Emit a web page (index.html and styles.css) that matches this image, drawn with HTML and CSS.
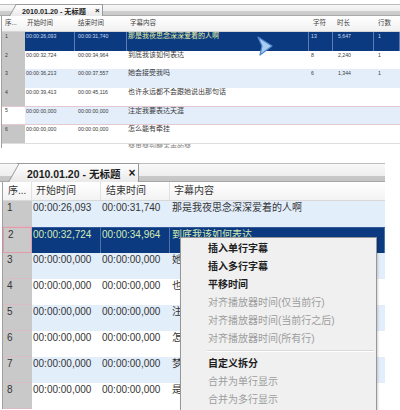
FILE: index.html
```html
<!DOCTYPE html>
<html lang="zh-CN">
<head>
<meta charset="utf-8">
<title>字幕编辑</title>
<link rel="stylesheet" href="styles.css">
</head>
<body>
<section class="shot shot-top">
  <div class="tabstrip tabstrip-top">
    <div class="strip-fill strip-left"></div>
    <div class="tab"><span class="tab-title">2010.01.20 - 无标题</span><span class="tab-close">×</span></div>
    <div class="strip-fill strip-rest"></div>
  </div>
  <div class="t-table">
    <div class="t-row t-head">
      <div class="c g">序...</div><div class="c p2">开始时间</div><div class="c p3">结束时间</div><div class="c p3">字幕内容</div><div class="c p4">字符</div><div class="c p4">时长</div><div class="c p4">行数</div>
    </div>
    <div class="t-row sel">
      <div class="c g">1</div><div class="c">00:00:26,093</div><div class="c p3">00:00:31,740</div><div class="c cjk">那是我夜思念深深爱着的人啊</div><div class="c p2">13</div><div class="c p5">5,647</div><div class="c p4">1</div>
    </div>
    <div class="t-row">
      <div class="c g">2</div><div class="c">00:00:32,724</div><div class="c p3">00:00:34,964</div><div class="c cjk">到底我该如何表达</div><div class="c p2">8</div><div class="c p5">2,240</div><div class="c p4">1</div>
    </div>
    <div class="t-row alt">
      <div class="c g">3</div><div class="c">00:00:36,213</div><div class="c p3">00:00:37,557</div><div class="c cjk">她会接受我吗</div><div class="c p2">6</div><div class="c p5">1,344</div><div class="c p4">1</div>
    </div>
    <div class="t-row">
      <div class="c g">4</div><div class="c">00:00:39,413</div><div class="c p3">00:00:45,116</div><div class="c cjk">也许永远都不会跟她说出那句话</div><div class="c"></div><div class="c"></div><div class="c"></div>
    </div>
    <div class="t-row alt pink">
      <div class="c g">5</div><div class="c">00:00:00,000</div><div class="c p3">00:00:00,000</div><div class="c cjk">注定我要表达天涯</div><div class="c"></div><div class="c"></div><div class="c"></div>
    </div>
    <div class="t-row">
      <div class="c g">6</div><div class="c">00:00:00,000</div><div class="c p3">00:00:00,000</div><div class="c cjk">怎么能有牵挂</div><div class="c"></div><div class="c"></div><div class="c"></div>
    </div>
    <div class="t-row t-last">
      <div class="c"></div><div class="c"></div><div class="c"></div><div class="c cjk">梦里梦到醒不来的梦</div><div class="c"></div><div class="c"></div><div class="c"></div>
    </div>
  </div>
  <svg class="cursor" width="18" height="21" viewBox="0 0 18 21"><polygon points="2,1 16,10 4,19 6,10" fill="#a9cdf0" stroke="#4f86cc" stroke-width="1.2" stroke-linejoin="round"/></svg>
</section>

<section class="shot shot-bottom">
  <div class="tabstrip tabstrip-bottom">
    <div class="strip-fill strip-left"></div>
    <div class="tab"><span class="tab-title">2010.01.20 - 无标题</span><span class="tab-close">×</span></div>
    <div class="strip-fill strip-rest"></div>
  </div>
  <div class="b-table">
    <div class="b-row b-head">
      <div class="c g">序...</div><div class="c">开始时间</div><div class="c">结束时间</div><div class="c">字幕内容</div>
    </div>
    <div class="b-row alt"><div class="c g">1</div><div class="c">00:00:26,093</div><div class="c">00:00:31,740</div><div class="c">那是我夜思念深深爱着的人啊</div></div>
    <div class="b-row sel"><div class="c g">2</div><div class="c">00:00:32,724</div><div class="c">00:00:34,964</div><div class="c">到底我该如何表达</div></div>
    <div class="b-row alt"><div class="c g">3</div><div class="c">00:00:00,000</div><div class="c">00:00:00,000</div><div class="c">她会接受我吗</div></div>
    <div class="b-row"><div class="c g">4</div><div class="c">00:00:00,000</div><div class="c">00:00:00,000</div><div class="c">也许永远都不会跟她说出那句话</div></div>
    <div class="b-row alt"><div class="c g">5</div><div class="c">00:00:00,000</div><div class="c">00:00:00,000</div><div class="c">注定我要表达天涯</div></div>
    <div class="b-row"><div class="c g">6</div><div class="c">00:00:00,000</div><div class="c">00:00:00,000</div><div class="c">怎么能有牵挂</div></div>
    <div class="b-row alt"><div class="c g">7</div><div class="c">00:00:00,000</div><div class="c">00:00:00,000</div><div class="c">梦里梦到醒不来的梦</div></div>
    <div class="b-row"><div class="c g">8</div><div class="c">00:00:00,000</div><div class="c">00:00:00,000</div><div class="c">是否在你身边</div></div>
  </div>

  <ul class="menu">
    <li class="mi on">插入单行字幕</li>
    <li class="mi on">插入多行字幕</li>
    <li class="mi on">平移时间</li>
    <li class="mi off">对齐播放器时间(仅当前行)</li>
    <li class="mi off">对齐播放器时间(当前行之后)</li>
    <li class="mi off">对齐播放器时间(所有行)</li>
    <li class="sep"></li>
    <li class="mi on">自定义拆分</li>
    <li class="mi off">合并为单行显示</li>
    <li class="mi off">合并为多行显示</li>
  </ul>
</section>
</body>
</html>
```

FILE: styles.css
```css
html, body {
  margin: 0;
  padding: 0;
  background: #ffffff;
  overflow: hidden;
}
body {
  width: 400px;
  height: 410px;
  font-family: "Liberation Sans", "Noto Sans CJK SC", sans-serif;
  color: #333333;
}

.shot {
  position: relative;
  overflow: hidden;
}

/* ---------- tab strips ---------- */
.tabstrip {
  display: flex;
  align-items: flex-end;
}
.strip-fill {
  box-sizing: border-box;
  border-top: 1px solid #bdbdbd;
}
.strip-rest {
  flex: 1;
}
.tab {
  position: relative;
  z-index: 0;
  display: flex;
  align-items: center;
  box-sizing: border-box;
  background: linear-gradient(#ffffff, #e9e9e9);
  border-top: 1px solid #9a9a9a;
  border-right: 1px solid #9a9a9a;
  font-weight: bold;
  color: #1c1c1c;
  white-space: nowrap;
}
.tab::before {
  content: "";
  position: absolute;
  z-index: -1;
  top: -1px;
  bottom: 0;
  left: -9px;
  width: 18px;
  background: linear-gradient(#ffffff, #e9e9e9);
  border-left: 1px solid #9a9a9a;
  border-top: 1px solid #9a9a9a;
  transform: skewX(-30deg);
  transform-origin: bottom left;
}

/* top strip */
.tabstrip-top {
  height: 16px;
}
.tabstrip-top .strip-fill {
  height: 12px;
  background: linear-gradient(#f7f7f7 0, #ececec 62%, #cfcfcf 62%, #c9c9c9 100%);
  border-bottom: 1px solid #aaaaaa;
}
.tabstrip-top .strip-left {
  width: 18px;
}
.tabstrip-top .tab {
  height: 12px;
  width: 85px;
  padding-left: 4px;
  font-size: 7.2px;
}
.tabstrip-top .tab-close {
  margin-left: 9px;
  font-size: 8px;
}

/* bottom strip */
.tabstrip-bottom {
  height: 20px;
  width: 385px;
}
.tabstrip-bottom .strip-fill {
  height: 19px;
  background: linear-gradient(#f8f8f8 0, #eeeeee 70%, #c9c9c9 72%, #c4c4c4 100%);
  border-bottom: 1px solid #a8a8a8;
}
.tabstrip-bottom .strip-left {
  width: 17px;
}
.tabstrip-bottom .tab {
  height: 19px;
  width: 122px;
  padding-left: 10px;
  font-size: 10.5px;
}
.tabstrip-bottom .tab-close {
  margin-left: 8px;
  font-size: 12px;
}

/* ---------- top table ---------- */
.shot-top {
  height: 148px;
}
.t-table {
  margin-left: 1px;
  border-left: 1px solid #a2a2a2;
}
.t-row {
  display: grid;
  grid-template-columns: 23px 50px 52px 182px 24px 41px 1fr;
  height: 18.5px;
}
.t-row .c {
  font-size: 5.2px;
  line-height: 8px;
  padding-left: 1px;
  white-space: nowrap;
  overflow: hidden;
  color: #3a3a3a;
}
.t-row .cjk {
  font-size: 7px;
  line-height: 8px;
}
.t-row .g {
  background: #c6c6c6;
  padding-left: 3px;
}
.t-row .p2 { padding-left: 2px; }
.t-row .p3 { padding-left: 3px; }
.t-row .p4 { padding-left: 4px; }
.t-row .p5 { padding-left: 5px; }

.t-head {
  height: 16px;
  background: linear-gradient(#ffffff, #f1f1f1);
  box-sizing: border-box;
  border-bottom: 1px solid #d6d6d6;
}
.t-head .c {
  font-size: 6.5px;
  line-height: 14px;
  color: #444444;
}
.t-head .g {
  background: transparent;
}
.t-row.alt .c {
  background: #e3eefa;
}
.t-row.alt .g {
  background: #c6c6c6;
}
.t-row.pink {
  box-shadow: inset 0 1px #e4c9d2, inset 0 -1px #e4c9d2;
}
.t-row.pink .c {
  background: transparent;
}
.t-row.pink .c:not(.g) {
  background: #e3eefa;
  border-top: 1px solid #e4c9d2;
  border-bottom: 1px solid #e4c9d2;
}
.t-row.sel .c:not(.g) {
  background: #0b3a80;
  color: #cfdcef;
  border-right: 1px solid #5a7db3;
}
.t-row.sel .cjk {
  color: #e3efa2 !important;
}
.t-last {
  border-top: 1px solid #dedede;
}
.t-last .c {
  color: #888888;
}

.cursor {
  position: absolute;
  left: 256px;
  top: 36px;
}

/* ---------- bottom table ---------- */
.shot-bottom {
  margin-top: 14px;
  width: 385px;
  height: 248px;
  overflow: visible;
}
.b-table {
  margin-left: 2px;
  border-left: 1px solid #a0a0a0;
}
.b-row {
  display: grid;
  grid-template-columns: 29px 69px 69px 1fr;
  height: 26px;
}
.b-row .c {
  font-size: 10px;
  line-height: 12px;
  padding: 1px 0 0 1px;
  white-space: nowrap;
  overflow: hidden;
  color: #353535;
}
.b-row .c:nth-child(4) {
  padding-left: 2px;
}
.b-row .g {
  background: #c9c9c9;
  padding-left: 4px;
  box-sizing: border-box;
  border-bottom: 1px solid #d9bcc5;
}
.b-row.alt .c:not(.g) {
  background: #e3eefb;
}
.b-head {
  height: 19px;
  background: linear-gradient(#ffffff, #f3f3f3);
  box-sizing: border-box;
  border-bottom: 1px solid #d8d8d8;
}
.b-head .c {
  line-height: 18px;
  padding-top: 0;
  color: #333333;
  border-right: 1px solid #e2e2e2;
}
.b-head .g {
  background: transparent;
  border-bottom: none;
  padding-left: 5px;
}
.b-head .c:nth-child(2) { padding-left: 4px; }
.b-head .c:nth-child(3) { padding-left: 5px; }
.b-head .c:nth-child(4) { padding-left: 4px; border-right: none; }

.b-row.sel .g {
  border: 1px solid #e39aab;
}
.b-row.sel .c:not(.g) {
  background: #0b3a80;
  color: #d3ebb0;
  border-right: 1px solid #4f73ab;
  border-top: 1px solid #33599a;
}

/* ---------- context menu ---------- */
.menu {
  position: absolute;
  left: 180px;
  top: 75px;
  width: 197px;
  height: 190px;
  margin: 0;
  padding: 2px 0 0 0;
  list-style: none;
  box-sizing: border-box;
  background: #f0f0f0;
  border: 1px solid #979797;
  box-shadow: 1px 1px 2px rgba(0, 0, 0, 0.18);
}
.mi {
  height: 18px;
  line-height: 18px;
  padding-left: 27px;
  font-size: 10px;
  white-space: nowrap;
}
.mi.on {
  color: #1e1e1e;
  font-weight: 600;
}
.mi.off {
  color: #9d9d9d;
}
.sep {
  height: 0;
  margin: 2px 2px 3px 26px;
  border-top: 1px solid #d9d9d9;
  border-bottom: 1px solid #ffffff;
}
```
